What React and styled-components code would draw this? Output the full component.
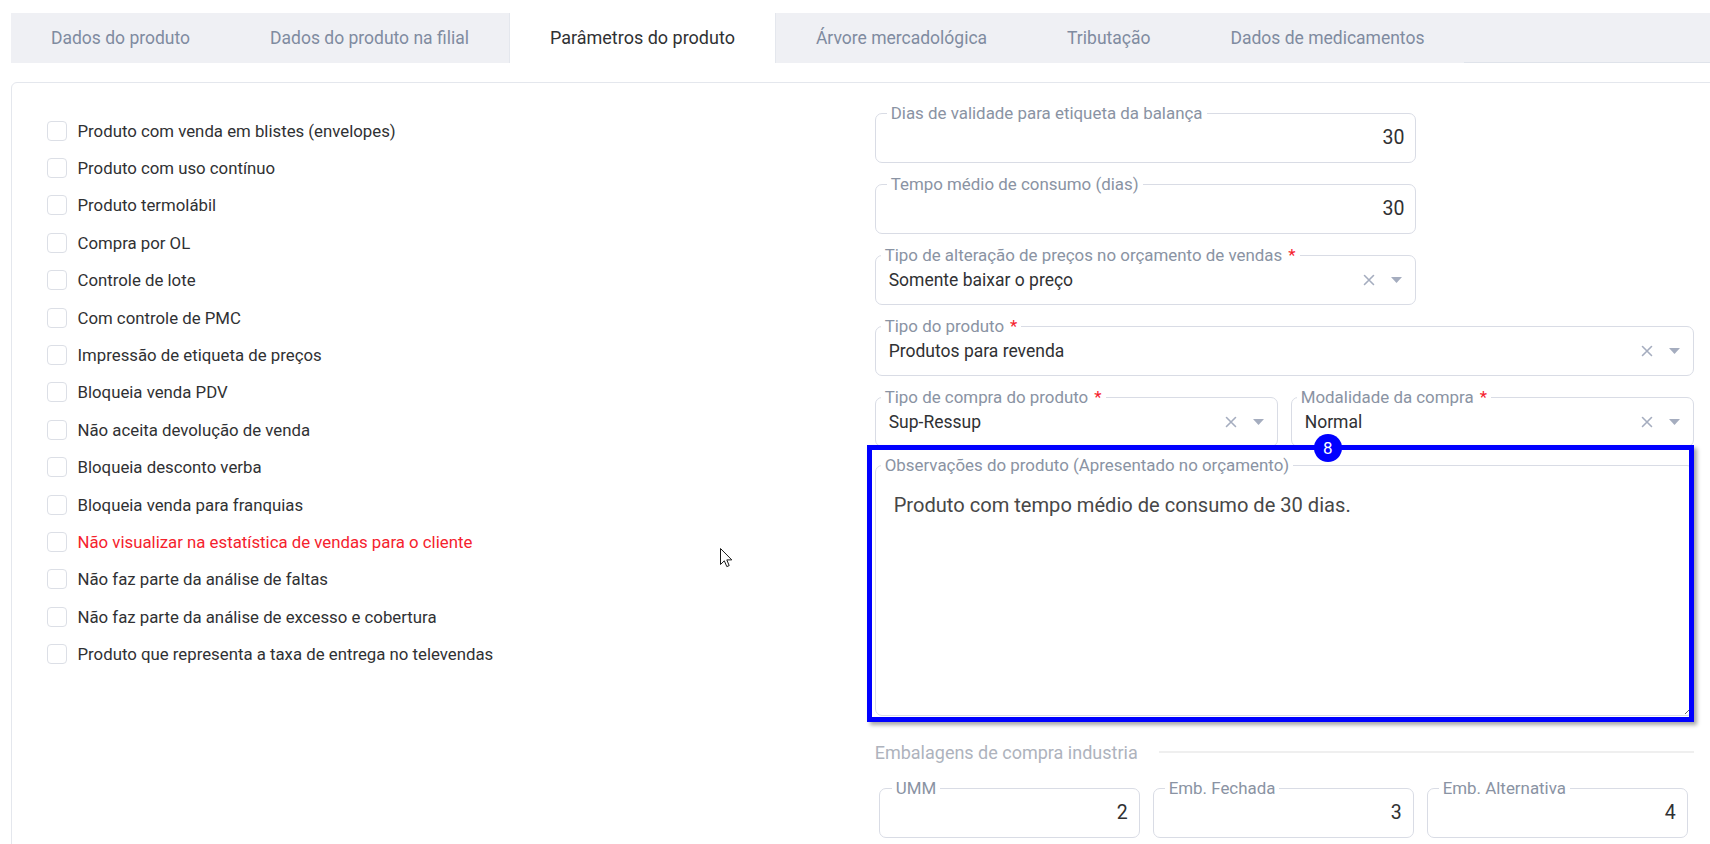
import React from 'react';
import styled, { createGlobalStyle } from 'styled-components';

const GlobalStyle = createGlobalStyle`
  html, body { margin: 0; padding: 0; background: #ffffff; overflow: hidden; }
  body { font-family: Roboto, "Noto Sans", "Liberation Sans", sans-serif; color: #303133; }
  *, *::before, *::after { box-sizing: border-box; }
`;

const Page = styled.div`
  position: relative;
  width: 1710px;
  height: 844px;
  overflow: hidden;
  padding: 13px 0 0 11px;
`;

const TabBar = styled.div`
  display: flex;
  height: 50px;
  background: #eff0f4;
`;

const Tab = styled.div`
  flex: none;
  padding: 0 40px;
  line-height: 50px;
  font-size: ${p => (p.$active ? '18px' : '17.5px')};
  white-space: nowrap;
  color: ${p => (p.$active ? '#303133' : '#7f8ba0')};
  background: ${p => (p.$active ? '#ffffff' : 'transparent')};
  border-left: ${p => (p.$active ? '1px solid #e4e7ed' : 'none')};
  border-right: ${p => (p.$active ? '1px solid #e4e7ed' : 'none')};
`;

const TabFiller = styled.div`
  flex: 1;
  border-bottom: 1px solid #dfe3ea;
`;

const Card = styled.div`
  margin-top: 19px;
  width: 1740px;
  height: 800px;
  border: 1px solid #e4e7ed;
  border-radius: 6px;
  padding: 21px 35px 0 35px;
  display: grid;
  grid-template-columns: 827.7px 819px;
  align-items: start;
`;

const CheckList = styled.div`
  display: flex;
  flex-direction: column;
  padding-top: 8px;
`;

const CheckRow = styled.label`
  display: flex;
  align-items: center;
  gap: 10.5px;
  height: 37.4px;
  font-size: 16.8px;
  color: ${p => (p.$danger ? '#f5222d' : '#303133')};
`;

const Box = styled.span`
  flex: none;
  width: 20px;
  height: 20px;
  border: 1px solid #dcdfe6;
  border-radius: 4px;
  background: #fff;
`;

const RightCol = styled.div`
  display: flex;
  flex-direction: column;
`;

const FieldGrid = styled.div`
  display: grid;
  grid-template-columns: repeat(6, 1fr);
  column-gap: 13px;
  row-gap: 12px;
  padding: ${p => p.$inset ? '0 6px 0 4px' : '0'};
  margin-top: ${p => p.$mt || 0}px;
`;

const Cell = styled.div`
  grid-column: span ${p => p.$span};
  position: relative;
  min-width: 0;
  margin-top: ${p => p.$mt || 0}px;
`;

const Fieldset = styled.fieldset`
  margin: 0;
  padding: 0;
  min-width: 0;
  border: 1px solid #d9dce5;
  border-radius: 7px;
`;

const Legend = styled.legend`
  margin-left: ${p => p.$indent}px;
  padding: 0 4px;
  font-size: 16.9px;
  line-height: 18px;
  color: #8a93a3;
  white-space: nowrap;
`;

const Req = styled.span`
  color: #f5222d;
  margin-left: 6px;
`;

const NumberValue = styled.div`
  height: 32px;
  margin-bottom: 8px;
  padding-right: 11px;
  text-align: right;
  font-size: 19.5px;
  line-height: 32px;
  color: #303133;
`;

const SelectValue = styled.div`
  height: 32px;
  margin-bottom: 8px;
  padding: 0 13px 0 13px;
  display: flex;
  align-items: center;
  font-size: 17.5px;
  color: #303133;
`;

const SelectText = styled.span`
  flex: 1;
  white-space: nowrap;
`;

const Icons = styled.span`
  display: flex;
  align-items: center;
  gap: 16px;
  color: #a5adbf;
`;

const TextArea = styled.textarea`
  display: block;
  width: 100%;
  height: 241px;
  border: none;
  outline: none;
  padding: 18px 18px;
  font-family: Roboto, "Noto Sans", sans-serif;
  font-size: 20.1px;
  line-height: 26px;
  color: #474747;
  background: transparent;
`;

const Highlight = styled.div`
  position: absolute;
  left: -8px;
  right: 0;
  top: -11px;
  bottom: -6px;
  border: 5px solid #0000ff;
  box-shadow: 3px 3px 4px rgba(0, 0, 0, 0.35);
  pointer-events: none;
`;

const Badge = styled.span`
  position: absolute;
  left: 442px;
  top: -16px;
  width: 28px;
  height: 28px;
  border-radius: 50%;
  background: #0000ff;
  color: #fff;
  font-size: 17px;
  line-height: 28px;
  text-align: center;
`;

const SectionHeader = styled.div`
  display: flex;
  align-items: center;
  gap: 21px;
  height: 24px;
  margin-top: 24px;
  font-size: 18px;
  color: #aeb3bd;
  white-space: nowrap;
`;

const SectionRule = styled.span`
  flex: 1;
  height: 2px;
  background: #efefef;
`;

const Cursor = styled.svg`
  position: absolute;
  left: 720px;
  top: 548px;
`;

const ClearIcon = () => (
  <svg width="12" height="12" viewBox="0 0 12 12">
    <path d="M1.5 1.5 L10.5 10.5 M10.5 1.5 L1.5 10.5" stroke="currentColor" strokeWidth="1.6" strokeLinecap="round" />
  </svg>
);

const CaretIcon = () => (
  <svg width="11" height="6" viewBox="0 0 11 6">
    <path d="M0 0 L11 0 L5.5 6 Z" fill="currentColor" />
  </svg>
);

const NumberField = ({ label, value, indent = 11 }) => (
  <Fieldset>
    <Legend $indent={indent}>{label}</Legend>
    <NumberValue>{value}</NumberValue>
  </Fieldset>
);

const SelectField = ({ label, value, required }) => (
  <Fieldset>
    <Legend $indent={5}>
      {label}
      {required && <Req>*</Req>}
    </Legend>
    <SelectValue>
      <SelectText>{value}</SelectText>
      <Icons>
        <ClearIcon />
        <CaretIcon />
      </Icons>
    </SelectValue>
  </Fieldset>
);

const tabs = [
  'Dados do produto',
  'Dados do produto na filial',
  'Parâmetros do produto',
  'Árvore mercadológica',
  'Tributação',
  'Dados de medicamentos',
];

const checks = [
  'Produto com venda em blistes (envelopes)',
  'Produto com uso contínuo',
  'Produto termolábil',
  'Compra por OL',
  'Controle de lote',
  'Com controle de PMC',
  'Impressão de etiqueta de preços',
  'Bloqueia venda PDV',
  'Não aceita devolução de venda',
  'Bloqueia desconto verba',
  'Bloqueia venda para franquias',
  'Não visualizar na estatística de vendas para o cliente',
  'Não faz parte da análise de faltas',
  'Não faz parte da análise de excesso e cobertura',
  'Produto que representa a taxa de entrega no televendas',
];

export default function App() {
  return (
    <>
      <GlobalStyle />
      <Page>
        <TabBar>
          {tabs.map((t, i) => (
            <Tab key={t} $active={i === 2}>{t}</Tab>
          ))}
          <TabFiller />
        </TabBar>
        <Card>
          <CheckList>
            {checks.map((c, i) => (
              <CheckRow key={c} $danger={i === 11}>
                <Box />
                {c}
              </CheckRow>
            ))}
          </CheckList>
          <RightCol>
            <FieldGrid>
              <Cell $span={4}>
                <NumberField label="Dias de validade para etiqueta da balança" value="30" />
              </Cell>
              <Cell $span={2} />
              <Cell $span={4}>
                <NumberField label="Tempo médio de consumo (dias)" value="30" />
              </Cell>
              <Cell $span={2} />
              <Cell $span={4}>
                <SelectField label="Tipo de alteração de preços no orçamento de vendas" value="Somente baixar o preço" required />
              </Cell>
              <Cell $span={2} />
              <Cell $span={6}>
                <SelectField label="Tipo do produto" value="Produtos para revenda" required />
              </Cell>
              <Cell $span={3}>
                <SelectField label="Tipo de compra do produto" value="Sup-Ressup" required />
              </Cell>
              <Cell $span={3}>
                <SelectField label="Modalidade da compra" value="Normal" required />
              </Cell>
              <Cell $span={6} $mt={-3}>
                <Fieldset>
                  <Legend $indent={5}>Observações do produto (Apresentado no orçamento)</Legend>
                  <TextArea readOnly defaultValue="Produto com tempo médio de consumo de 30 dias." />
                </Fieldset>
                <Highlight>
                  <Badge>8</Badge>
                </Highlight>
              </Cell>
            </FieldGrid>
            <SectionHeader>
              Embalagens de compra industria
              <SectionRule />
            </SectionHeader>
            <FieldGrid $inset $mt={15}>
              <Cell $span={2}>
                <NumberField label="UMM" value="2" indent={12} />
              </Cell>
              <Cell $span={2}>
                <NumberField label="Emb. Fechada" value="3" indent={11} />
              </Cell>
              <Cell $span={2}>
                <NumberField label="Emb. Alternativa" value="4" indent={11} />
              </Cell>
            </FieldGrid>
          </RightCol>
        </Card>
        <Cursor width="13" height="20" viewBox="0 0 13 20">
          <path d="M0.5 0.5 L0.5 16.5 L4.3 12.8 L6.8 18.6 L9.2 17.6 L6.8 11.9 L11.8 11.9 Z" fill="#ffffff" stroke="#1a1a1a" strokeWidth="1" strokeLinejoin="round" />
        </Cursor>
      </Page>
    </>
  );
}
